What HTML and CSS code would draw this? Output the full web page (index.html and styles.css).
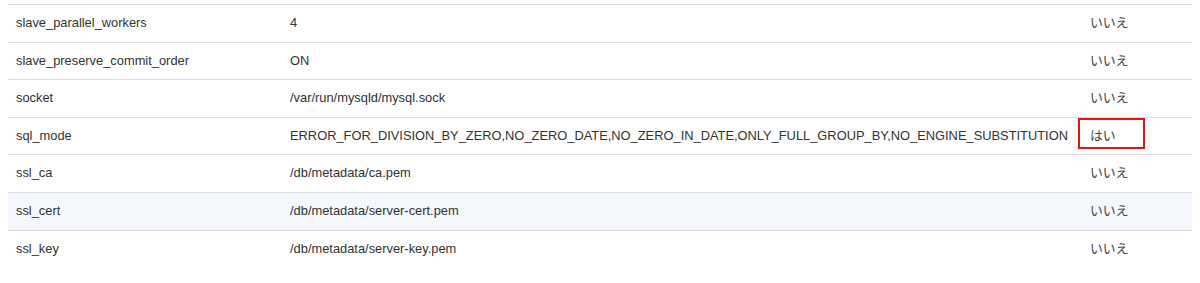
FILE: index.html
```html
<!DOCTYPE html>
<html lang="ja">
<head>
<meta charset="utf-8">
<title>Variables</title>
<link rel="stylesheet" href="styles.css">
</head>
<body>
<table class="vars">
  <colgroup>
    <col class="c-name">
    <col class="c-value">
    <col class="c-flag">
  </colgroup>
  <tbody>
    <tr><td>slave_parallel_workers</td><td>4</td><td class="flag">いいえ</td></tr>
    <tr><td>slave_preserve_commit_order</td><td>ON</td><td class="flag">いいえ</td></tr>
    <tr><td>socket</td><td>/var/run/mysqld/mysql.sock</td><td class="flag">いいえ</td></tr>
    <tr><td>sql_mode</td><td>ERROR_FOR_DIVISION_BY_ZERO,NO_ZERO_DATE,NO_ZERO_IN_DATE,ONLY_FULL_GROUP_BY,NO_ENGINE_SUBSTITUTION</td><td class="flag"><span class="mark">はい</span></td></tr>
    <tr><td>ssl_ca</td><td>/db/metadata/ca.pem</td><td class="flag">いいえ</td></tr>
    <tr class="hover"><td>ssl_cert</td><td>/db/metadata/server-cert.pem</td><td class="flag">いいえ</td></tr>
    <tr><td>ssl_key</td><td>/db/metadata/server-key.pem</td><td class="flag">いいえ</td></tr>
  </tbody>
</table>
</body>
</html>
```

FILE: styles.css
```css
html, body {
  margin: 0;
  background: #ffffff;
}
body {
  padding: 4px 8px 0 8px;
  font-family: "Liberation Sans", Arial, "Noto Sans CJK JP", sans-serif;
  font-size: 12.87px;
  color: #333333;
}
.vars {
  width: 1184px;
  border-collapse: collapse;
  table-layout: fixed;
}
.c-name { width: 274px; }
.c-value { width: 800px; }
.c-flag { width: 110px; }
.vars td {
  padding: 9px 8px;
  line-height: 18.6px;
  border-top: 1px solid #dcdee2;
  white-space: nowrap;
  vertical-align: top;
}
.vars td.flag {
  color: #444444;
}
.vars tr.hover td {
  background: #f4f7fb;
}
.mark {
  position: relative;
  display: inline-block;
}
.mark::after {
  content: "";
  position: absolute;
  left: -12px;
  top: -9px;
  width: 67px;
  height: 31px;
  box-sizing: border-box;
  border: 2px solid #ee1111;
}
```
